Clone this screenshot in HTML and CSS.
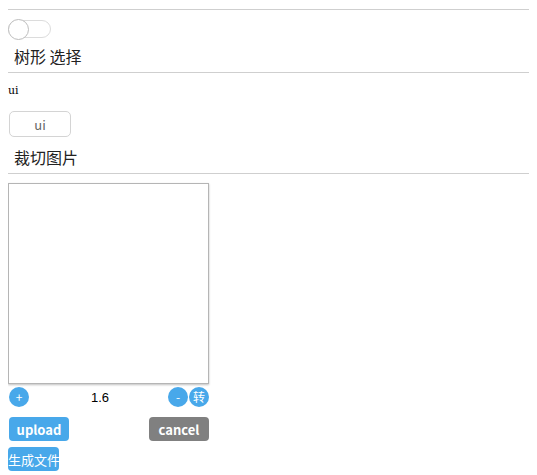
FILE: index.html
```html
<!DOCTYPE html>
<html>
<head>
<meta charset="utf-8">
<link rel="stylesheet" href="styles.css">
</head>
<body>
<div class="divider first"></div>
<div class="switch"><span class="knob"></span></div>
<div class="label">树形 选择</div>
<div class="divider after-label"></div>
<div class="mono">ui</div>
<button class="btn-ui">ui</button>
<div class="label crop-label">裁切图片</div>
<div class="divider after-label"></div>
<div class="cropper"></div>
<div class="controls">
  <span class="circle">+</span>
  <span class="scale">1.6</span>
  <span class="right">
    <span class="circle">-</span>
    <span class="circle">转</span>
  </span>
</div>
<div class="actions">
  <button class="btn blue">upload</button>
  <button class="btn gray">cancel</button>
</div>
<button class="btn-gen">生成文件</button>
</body>
</html>
```
FILE: styles.css
```css
html, body { background: #fff; }
html { overflow: hidden; }
body {
  margin: 8px 8px 0 8px;
  font-family: "Noto Sans CJK SC", "Noto Sans", sans-serif;
  color: #333;
}
.divider {
  height: 1px;
  background: #cfcfcf;
  margin-right: -8px;
}
.divider.first { margin-top: 1px; }
.divider.after-label { margin-top: 4px; }
.switch {
  box-sizing: border-box;
  position: relative;
  width: 43px;
  height: 18px;
  margin-top: 10px;
  border: 1px solid #dcdcdc;
  border-radius: 9px;
  background: #fff;
}
.knob {
  position: absolute;
  left: -1px;
  top: -2px;
  box-sizing: border-box;
  width: 21px;
  height: 21px;
  border-radius: 50%;
  border: 1px solid #bdbdbd;
  background: #fff;
}
.label {
  margin-top: 6px;
  padding-left: 6px;
  font-size: 16px;
  line-height: 24px;
  color: #222;
}
.mono {
  margin-top: 10px;
  font-family: "DejaVu Serif", serif;
  font-size: 11px;
  line-height: 16px;
  color: #000;
}
.btn-ui {
  display: block;
  box-sizing: border-box;
  margin: 12px 0 0 1px;
  width: 62px;
  height: 26px;
  background: #fff;
  border: 1px solid #d4d4d4;
  border-radius: 5px;
  font-family: "Noto Sans CJK SC", sans-serif;
  font-size: 13px;
  color: #666;
  padding: 0;
}
.crop-label { margin-top: 8px; }
.cropper {
  box-sizing: border-box;
  margin-top: 9px;
  width: 201px;
  height: 201px;
  border: 1px solid #b5b5b5;
  box-shadow: 0 1px 2px rgba(0,0,0,0.25);
  background: #fff;
}
.controls {
  display: flex;
  align-items: center;
  width: 201px;
  height: 20px;
  margin-top: 3px;
}
.circle {
  display: inline-flex;
  align-items: center;
  justify-content: center;
  width: 20px;
  height: 20px;
  border-radius: 50%;
  background: #48a8ea;
  color: #fff;
  font-size: 12px;
  line-height: 1;
}
.controls > .circle { margin-left: 1px; }
.scale {
  margin-left: 62px;
  font-family: "Liberation Sans", sans-serif;
  font-size: 13px;
  color: #000;
}
.right {
  margin-left: auto;
  display: flex;
  gap: 1px;
}
.actions {
  display: flex;
  justify-content: space-between;
  width: 201px;
  margin-top: 10px;
  padding-left: 1px;
  box-sizing: border-box;
}
.btn {
  width: 60px;
  height: 24px;
  border: none;
  border-radius: 4px;
  color: #fff;
  font-family: "Noto Sans CJK SC", sans-serif;
  font-weight: bold;
  font-size: 13px;
  padding: 0;
}
.blue { background: #48a8ea; }
.gray { background: #808080; }
.btn-gen {
  display: block;
  margin-top: 6px;
  height: 24px;
  padding: 0;
  border: none;
  border-radius: 4px;
  background: #48a8ea;
  color: #fff;
  font-family: "Noto Sans CJK SC", sans-serif;
  font-size: 13px;
  width: 51px;
  white-space: nowrap;
  overflow: visible;
  text-align: left;
}
```
